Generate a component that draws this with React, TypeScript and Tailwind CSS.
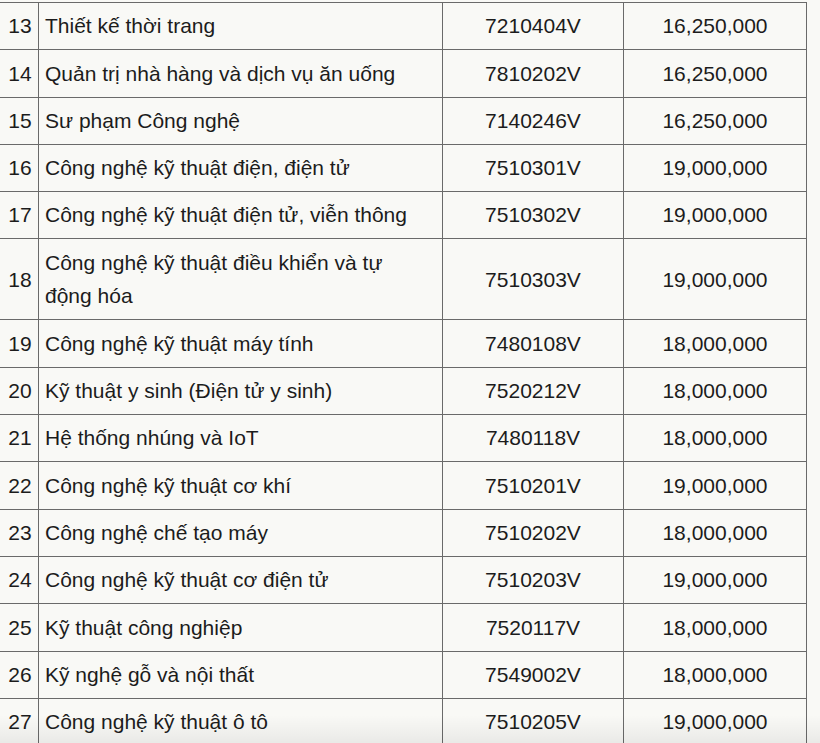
import React from 'react';

type Row = { stt: number; name: string; code: string; fee: string };

const rows: Row[] = [
    { stt: 13, name: 'Thiết kế thời trang', code: '7210404V', fee: '16,250,000' },
    { stt: 14, name: 'Quản trị nhà hàng và dịch vụ ăn uống', code: '7810202V', fee: '16,250,000' },
    { stt: 15, name: 'Sư phạm Công nghệ', code: '7140246V', fee: '16,250,000' },
    { stt: 16, name: 'Công nghệ kỹ thuật điện, điện tử', code: '7510301V', fee: '19,000,000' },
    { stt: 17, name: 'Công nghệ kỹ thuật điện tử, viễn thông', code: '7510302V', fee: '19,000,000' },
    { stt: 18, name: 'Công nghệ kỹ thuật điều khiển và tự động hóa', code: '7510303V', fee: '19,000,000' },
    { stt: 19, name: 'Công nghệ kỹ thuật máy tính', code: '7480108V', fee: '18,000,000' },
    { stt: 20, name: 'Kỹ thuật y sinh (Điện tử y sinh)', code: '7520212V', fee: '18,000,000' },
    { stt: 21, name: 'Hệ thống nhúng và IoT', code: '7480118V', fee: '18,000,000' },
    { stt: 22, name: 'Công nghệ kỹ thuật cơ khí', code: '7510201V', fee: '19,000,000' },
    { stt: 23, name: 'Công nghệ chế tạo máy', code: '7510202V', fee: '18,000,000' },
    { stt: 24, name: 'Công nghệ kỹ thuật cơ điện tử', code: '7510203V', fee: '19,000,000' },
    { stt: 25, name: 'Kỹ thuật công nghiệp', code: '7520117V', fee: '18,000,000' },
    { stt: 26, name: 'Kỹ nghệ gỗ và nội thất', code: '7549002V', fee: '18,000,000' },
    { stt: 27, name: 'Công nghệ kỹ thuật ô tô', code: '7510205V', fee: '19,000,000' },
];

const cell = 'border border-[#6a6a6a] py-[6.3px] leading-[33.7px] align-middle';

export default function App(): JSX.Element {
    return (
        <div className="relative h-[743px] w-[820px] overflow-hidden bg-[#f9f9f6] font-['Liberation_Sans',Arial,sans-serif] text-[21px] text-[#1c1c1c]">
            <table className="ml-[-1px] mt-[2px] w-[807px] table-fixed border-collapse">
                <colgroup>
                    <col className="w-[39px]" />
                    <col className="w-[404px]" />
                    <col className="w-[181px]" />
                    <col className="w-[183px]" />
                </colgroup>
                <tbody>
                    {rows.map((row) => (
                        <tr key={row.stt}>
                            <td className={`${cell} pl-[2px] text-center`}>{row.stt}</td>
                            <td className={`${cell} pl-[6px] pr-[14px] text-left`}>{row.name}</td>
                            <td className={`${cell} text-center`}>{row.code}</td>
                            <td className={`${cell} text-center`}>{row.fee}</td>
                        </tr>
                    ))}
                </tbody>
            </table>
            <div className="pointer-events-none absolute bottom-0 left-0 h-[28px] w-full bg-gradient-to-b from-transparent to-[#00000010]" />
        </div>
    );
}
